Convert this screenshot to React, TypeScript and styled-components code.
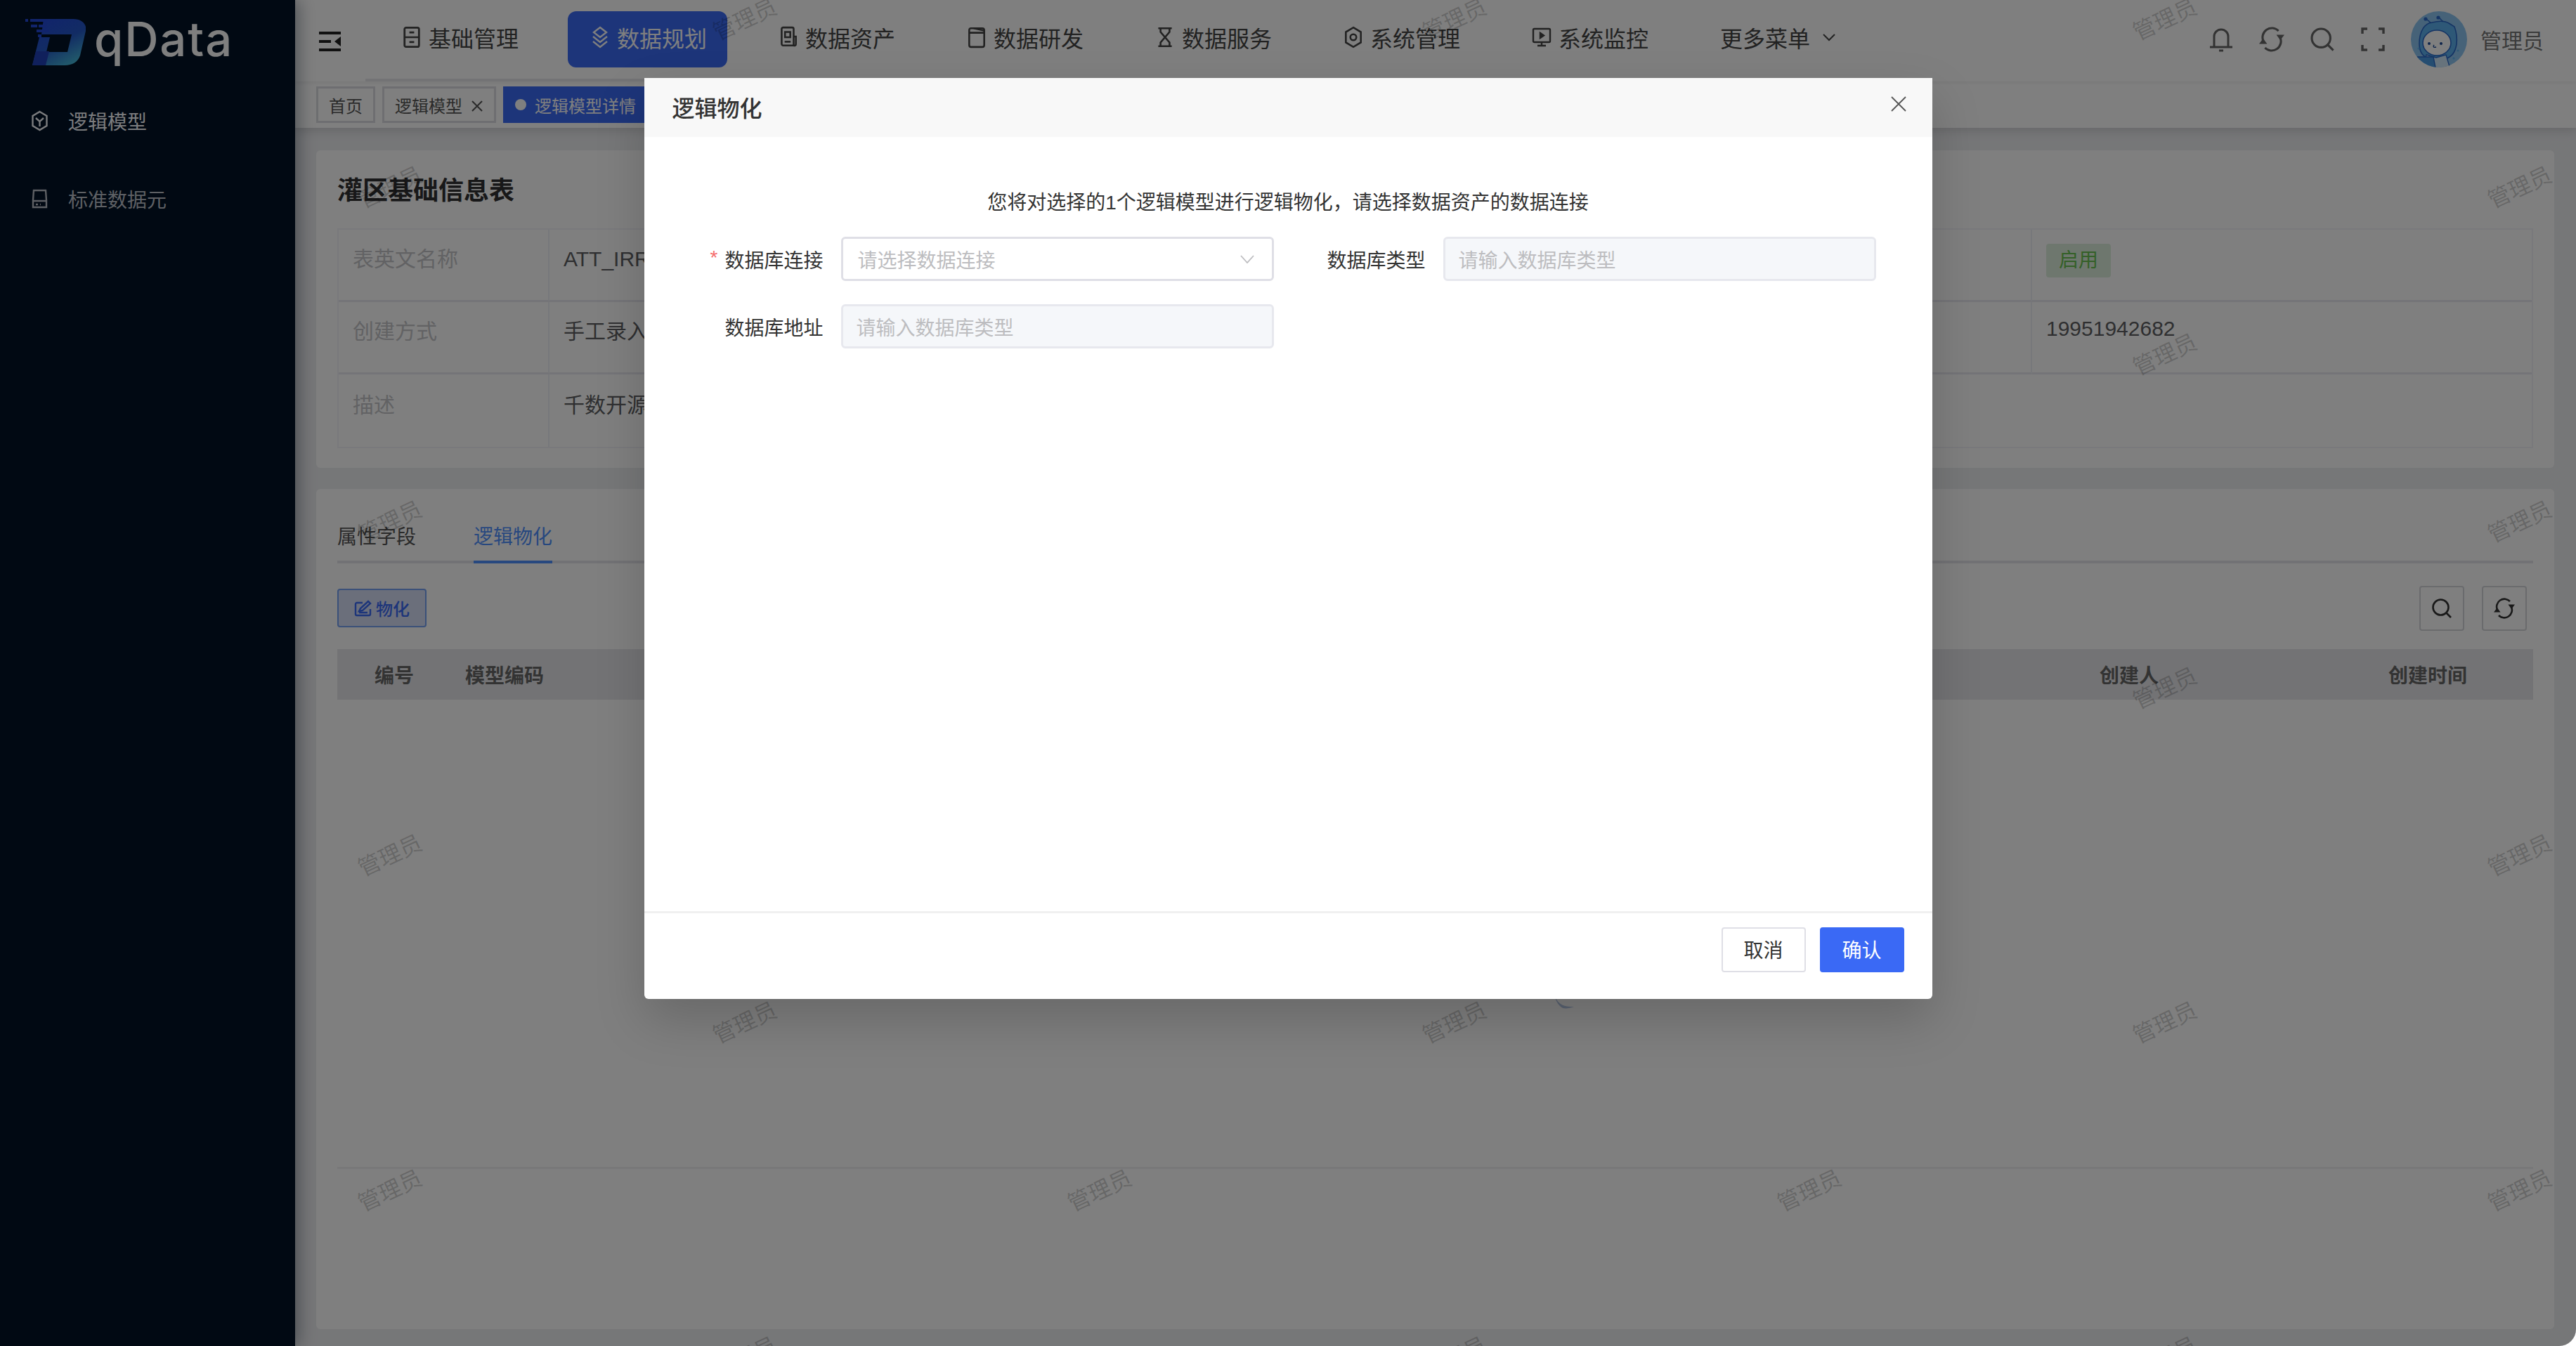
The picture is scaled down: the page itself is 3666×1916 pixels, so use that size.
import React from 'react';
import styled, { createGlobalStyle } from 'styled-components';

const GlobalStyle = createGlobalStyle`
  html, body { margin: 0; padding: 0; width: 3666px; height: 1916px; overflow: hidden; background: #fff; }
  * { box-sizing: border-box; }
  body { font-family: "Liberation Sans", "Noto Sans CJK SC", sans-serif; }
`;

const Page = styled.div`
  position: relative; width: 3666px; height: 1916px; display: grid;
  grid-template-columns: 420px 1fr; overflow: hidden; border-bottom-right-radius: 24px; background: #eceef1;
`;

/* ---------- sidebar ---------- */
const Sidebar = styled.aside`
  background: #031226; display: flex; flex-direction: column; z-index: 2;
  box-shadow: 6px 0 22px rgba(0, 21, 41, .35);
`;
const Brand = styled.div`
  height: 116px; display: flex; align-items: flex-start; padding: 27px 0 0 34px; gap: 12px;
`;
const LogoMark = styled.svg`flex: none; width: 88px; height: 66px;`;
const BrandName = styled.span`
  font-family: Inter, sans-serif; font-size: 67px; line-height: 72px; font-weight: 500; color: #fff; letter-spacing: 1.8px; margin-top: -7px;
`;
const SideMenu = styled.nav`
  display: flex; flex-direction: column; gap: 55px; padding: 28px 0 0 44px;
`;
const SideItem = styled.div<{ $active?: boolean }>`
  display: flex; align-items: center; height: 56px; gap: 28px; font-size: 28px;
  color: ${p => (p.$active ? '#f6f8fc' : '#bcc0c8')};
  svg { width: 25px; height: 30px; flex: none; }
`;

/* ---------- top ---------- */
const Main = styled.div`display: flex; flex-direction: column; min-width: 0;`;
const TopBar = styled.header`
  height: 116px; background: #fff; display: flex; align-items: flex-start; position: relative;
  z-index: 1; box-shadow: 0 2px 6px rgba(0, 0, 0, .06);
`;
const Hamburger = styled.div`
  width: 100px; height: 112px; flex: none; padding: 45px 0 0 34px;
  svg { display: block; width: 31px; height: 28px; }
`;
const Menu = styled.nav`
  width: 2100px; height: 116px; flex: none; display: flex; gap: 41px; padding: 16px 0 0 20px; border-bottom: 4px solid #e6e7eb;
`;
const MenuItem = styled.div<{ $active?: boolean; $auto?: boolean }>`
  width: ${p => (p.$auto ? 'auto' : '227px')}; height: 80px; flex: none; border-radius: 12px; display: flex; align-items: center; gap: 10px; padding: 0 24px 6px 32px;
  font-size: 32px; white-space: nowrap; color: ${p => (p.$active ? '#fff' : '#444')}; background: ${p => (p.$active ? '#3a6af5' : 'none')};
  svg { flex: none; width: 28px; height: 32px; }
`;
const MoreChevron = styled.svg`
  && { width: 18px; height: 12px; margin-left: 8px; }
`;
const TopRight = styled.div`
  flex: 1; display: flex; align-items: center; justify-content: flex-end; height: 112px; gap: 36px; padding-right: 46px;
`;
const ToolIcon = styled.svg`width: 36px; height: 36px; flex: none; color: #666;`;
const UserBox = styled.div`display: flex; align-items: center; gap: 19px; font-size: 30px; white-space: nowrap; color: #777;`;
const Avatar = styled.svg`width: 80px; height: 80px; border-radius: 50%; flex: none;`;

const TagsBar = styled.div`
  height: 66px; background: #fff; display: flex; align-items: center; gap: 10px; padding: 0 0 0 30px;
  box-shadow: 0 4px 14px rgba(0, 0, 0, .14); position: relative;
`;
const Tag = styled.div<{ $active?: boolean }>`
  height: 52px; display: flex; align-items: center; gap: 12px; font-size: 24px; white-space: nowrap;
  padding: 0 ${p => (p.$active ? '34px' : '15px')} 0 ${p => (p.$active ? '14px' : '15px')};
  border: 3px solid ${p => (p.$active ? '#3a6af5' : '#dcdde2')};
  color: ${p => (p.$active ? '#fff' : '#555')}; background: ${p => (p.$active ? '#3a6af5' : '#fff')};
`;
const TagDot = styled.i`width: 16px; height: 16px; border-radius: 50%; background: #fff; display: block;`;
const TagClose = styled.svg`width: 18px; height: 18px; margin-top: 4px;`;

/* ---------- content ---------- */
const Content = styled.main`
  flex: 1; background: #edeef1; padding: 32px 31px 24px 30px; display: flex; flex-direction: column; gap: 30px; min-height: 0;
`;
const Card = styled.section<{ $grow?: boolean }>`
  background: #fff; border-radius: 6px; padding: 0 30px; ${p => (p.$grow ? 'flex: 1; position: relative;' : 'height: 452px;')}
`;
const Title = styled.h2`
  margin: 0; height: 111px; padding-top: 37px; font-size: 36px; line-height: 42px; font-weight: 700; color: #303133;
`;
const Desc = styled.div`
  display: grid; grid-template-columns: 300px 740px 304px 738px 328px 711px; grid-auto-rows: 103px; border: 2px solid #f2f3f8;
`;
const Cell = styled.div<{ $label?: boolean; $span?: number; $last?: boolean }>`
  ${p => (p.$span ? `grid-column: span ${p.$span};` : '')}
  border-right: ${p => (p.$last ? '0' : '2px solid #eff0f6')};
  border-bottom: 3px solid #e8e9f0;
  padding: 24px 20px 0 20px; font-size: 30px; line-height: 36px;
  color: ${p => (p.$label ? '#c4c5c8' : '#5e5f62')};
  &:nth-last-child(-n + 2) { border-bottom: 0; padding-top: 26px; }
`;
const StatusTag = styled.span`
  display: inline-flex; align-items: center; justify-content: center; width: 92px; height: 48px; margin-top: -4px;
  background: #dcefdc; color: #68c050; border-radius: 4px; font-size: 28px; line-height: 48px;
`;
const PhoneText = styled.span`position: relative; top: -4px;`;

const Tabs = styled.div`
  display: flex; gap: 82px; height: 106px; border-bottom: 4px solid #e4e5ea;
`;
const TabItem = styled.div<{ $active?: boolean }>`
  height: 106px; padding: 51px 0 0; font-size: 28px; line-height: 36px; width: 112px; text-align: center;
  color: ${p => (p.$active ? '#4f90ff' : '#555')};
  border-bottom: 4px solid ${p => (p.$active ? '#4f90ff' : 'transparent')};
`;
const Toolbar = styled.div`
  display: flex; align-items: flex-start; justify-content: space-between; height: 122px; padding-top: 32px; padding-right: 9px;
`;
const PlanButton = styled.div`
  width: 127px; height: 55px; margin-top: 4px; border: 2px solid #74a0f2; border-radius: 4px; background: #d6def7;
  color: #3a6af5; font-size: 24px; font-weight: 500; display: flex; align-items: center; justify-content: center; gap: 6px;
  svg { width: 25px; height: 24px; }
`;
const SquareButtons = styled.div`display: flex; gap: 25px;`;
const SquareButton = styled.div`
  width: 64px; height: 64px; border: 2px solid #d4d6da; border-radius: 4px; display: flex; align-items: center; justify-content: center; color: #333;
  svg { width: 30px; height: 30px; }
`;
const TableHead = styled.div`
  height: 72px; background: #e6e7ea; display: grid; grid-template-columns: 182px 2326px 411px 206px; align-items: center;
  font-size: 28px; font-weight: 700; color: #666;
`;
const HeadCell = styled.div<{ $pad: number }>`padding-left: ${p => p.$pad}px; white-space: nowrap;`;
const FootLine = styled.div`
  position: absolute; left: 30px; right: 30px; top: 965px; height: 3px; background: #f0f1f2;
`;
const Spinner = styled.svg`
  position: absolute; left: 1760px; top: 700px; width: 40px; height: 40px;
`;

/* ---------- watermark ---------- */
const Watermarks = styled.div`position: absolute; inset: 0; pointer-events: none; z-index: 3; overflow: hidden;`;
const Mark = styled.span`
  position: absolute; width: 96px; height: 32px; margin: -16px 0 0 -48px; font-size: 32px; line-height: 32px; white-space: nowrap;
  color: rgba(0, 0, 0, .19); transform: rotate(-25deg);
`;

/* ---------- modal ---------- */
const Overlay = styled.div`
  position: absolute; inset: 0; background: rgba(0, 0, 0, .5); z-index: 4; display: flex; justify-content: center; align-items: flex-start; padding-top: 111px;
`;
const Dialog = styled.div`
  width: 1833px; height: 1311px; background: #fff; border-radius: 0 0 6px 6px; display: flex; flex-direction: column;
  box-shadow: 0 30px 70px rgba(0, 0, 0, .18);
`;
const DialogHead = styled.div`
  height: 84px; background: #f8f8f8; display: flex; align-items: center; justify-content: space-between; padding: 0 37px 3px 40px;
  font-size: 32px; font-weight: 500; color: #333; svg { width: 22px; height: 22px; margin-top: -7px; }
`;
const DialogBody = styled.div`flex: 1; padding: 76px 0 0 0; min-height: 0;`;
const Prompt = styled.p`
  margin: 0 0 30px; text-align: center; font-size: 28px; line-height: 36px; color: #333;
`;
const FormGrid = styled.div`
  display: grid; grid-template-columns: 896px 857px; grid-auto-rows: 63px; row-gap: 33px;
`;
const FormRow = styled.div`display: flex; align-items: center; justify-content: flex-end; gap: 25px;`;
const FieldLabel = styled.label`font-size: 28px; color: #333; white-space: nowrap; position: relative;`;
const Required = styled.span`position: absolute; left: -21px; top: 2px; color: #f56c6c; font-size: 28px;`;
const Field = styled.div<{ $disabled?: boolean }>`
  width: 616px; height: 63px; flex: none; display: flex; align-items: center; justify-content: space-between; padding: 0 25px 0 ${p => (p.$disabled ? '19px' : '21px')};
  border: 3px solid ${p => (p.$disabled ? '#e7e8ee' : '#dfdfe6')}; border-radius: 6px; background: ${p => (p.$disabled ? '#f5f7fa' : '#fff')};
  font-size: 28px; color: #bdbdc0;
  svg { width: 20px; height: 12px; }
`;
const DialogFoot = styled.div`
  height: 125px; border-top: 3px solid #f0f0f0; display: flex; justify-content: flex-end; align-items: flex-start; gap: 20px; padding: 20px 40px 0 0;
`;
const FootButton = styled.div<{ $primary?: boolean }>`
  width: 120px; height: 64px; border-radius: 4px; display: flex; align-items: center; justify-content: center; font-size: 28px; padding-bottom: 2px;
  border: 2px solid ${p => (p.$primary ? '#3a69f5' : '#dfdfe6')}; background: ${p => (p.$primary ? '#3a69f5' : '#fff')}; color: ${p => (p.$primary ? '#fff' : '#333')};
`;

/* ---------- icons ---------- */
const S = { fill: 'none', stroke: 'currentColor', strokeWidth: 2.4 } as const;
const IconBase = () => (
  <svg viewBox="0 0 24 28" {...S}><rect x="3" y="2" width="18" height="24" rx="2" /><path d="M3 14h18M9 8h6M9 20h6" /></svg>
);
const IconLayers = () => (
  <svg viewBox="0 0 28 32" {...S}><path d="M14 2l9 7-9 7-9-7zM4 15l10 8 10-8M4 22l10 8 10-8" /></svg>
);
const IconAsset = () => (
  <svg viewBox="0 0 26 30" {...S}><path d="M4 4a2 2 0 012-2h12a2 2 0 012 2v22H6a2 2 0 01-2-2z" /><path d="M20 14h3v10a2 2 0 01-3 2" /><rect x="8.5" y="8" width="7" height="7" /><path d="M8 21h8" /></svg>
);
const IconDev = () => (
  <svg viewBox="0 0 26 30" {...S}><rect x="3" y="3" width="20" height="25" rx="2.5" /><path d="M3 9h20M9 3l14 3" /></svg>
);
const IconHourglass = () => (
  <svg viewBox="0 0 26 30" {...S}><path d="M4 3h18M4 27h18M7 3v5l12 14v5M19 3v5L7 22v5" /></svg>
);
const IconHex = () => (
  <svg viewBox="0 0 26 30" {...S}><path d="M13 2l10 6v14l-10 6-10-6V8z" /><circle cx="13" cy="15" r="4" /></svg>
);
const IconMonitor = () => (
  <svg viewBox="0 0 28 30" {...S}><rect x="2" y="3" width="24" height="19" rx="1.5" /><path d="M14 22v5M8 27h12" /><path d="M12 9l5 3.5-5 3.5z" fill="currentColor" /></svg>
);
const IconHamburger = () => (
  <svg viewBox="0 0 31 28" fill="#222"><rect width="31" height="4" /><rect y="12" width="17" height="4" /><rect y="24" width="31" height="4" /><path d="M31 7v14l-9-7z" /></svg>
);
const IconEdit = () => (
  <svg viewBox="0 0 25 24" fill="none" stroke="currentColor" strokeWidth="2.4"><path d="M12 4H4a2 2 0 00-2 2v14a2 2 0 002 2h17a2 2 0 002-2v-7" /><path d="M7 16l2-4L20 2l3 3-11 10zM7 18h12" /></svg>
);
const SearchGlyph = () => (<><circle cx="13.5" cy="13.5" r="11" /><path d="M21.5 21.5l6.5 6.5" /></>);
const RefreshGlyph = () => (
  <>
    <path d="M5 17a11 11 0 0 1 18-12" />
    <path d="M25 13a11 11 0 0 1-18 12" />
    <path d="M20.5 9.5H30L25.2 16z" fill="currentColor" stroke="none" />
    <path d="M0 20.5h9.5L4.8 14z" fill="currentColor" stroke="none" />
  </>
);

const wmRows = [28, 267, 505, 743, 980, 1218, 1456, 1695, 1933];
const wmCols = [555, 1060, 1565, 2070, 2575, 3081, 3586];
const marks = wmRows.flatMap((y, r) => wmCols.filter((_, c) => (c + r) % 2 === 1).map(x => ({ x, y })));

const menu: [string, React.ReactNode][] = [
  ['基础管理', <IconBase key="a" />],
  ['数据规划', <IconLayers key="b" />],
  ['数据资产', <IconAsset key="c" />],
  ['数据研发', <IconDev key="d" />],
  ['数据服务', <IconHourglass key="e" />],
  ['系统管理', <IconHex key="f" />],
  ['系统监控', <IconMonitor key="g" />],
];

export default function App() {
  return (
    <>
      <GlobalStyle />
      <Page>
        <Sidebar>
          <Brand>
            <LogoMark viewBox="0 0 88 66">
              <defs>
                <linearGradient id="lg" x1="0.2" y1="0" x2="0.8" y2="1">
                  <stop offset="0" stopColor="#2348d8" /><stop offset=".5" stopColor="#2458c8" /><stop offset="1" stopColor="#47c0d8" />
                </linearGradient>
              </defs>
              <path d="M28 0H70C83 0 90 8 88 17L80 52C77 61 69 66 58 66H12L22 26H37L32 47H62L68 22H25Z" fill="url(#lg)" />
              <path d="M12 66l5-20h19l-5 20z" fill="#2040b8" />
              <path d="M2 0h4v4H2zM9 0h24v4H9zM10 8h9v4h-9zM21 8h11v4H21zM18 15h18v4H18zM20 22h5v4h-5z" fill="#2348d8" />
            </LogoMark>
            <BrandName>qData</BrandName>
          </Brand>
          <SideMenu>
            <SideItem $active>
              <svg viewBox="0 0 25 30" fill="none" stroke="currentColor" strokeWidth="2.4"><path d="M12.5 2l10 6v14l-10 6-10-6V8z" /><path d="M7 11l5.5 5 5.5-5M12.5 16v7" /></svg>
              逻辑模型
            </SideItem>
            <SideItem>
              <svg viewBox="0 0 25 30" fill="none" stroke="currentColor" strokeWidth="2.4"><path d="M4 3h17l1 14v10H3V17z" /><path d="M3 18h19M7 23h3M13 23h1" /></svg>
              标准数据元
            </SideItem>
          </SideMenu>
        </Sidebar>
        <Main>
          <TopBar>
            <Hamburger><IconHamburger /></Hamburger>
            <Menu>
              {menu.map(([t, icon], i) => (
                <MenuItem key={t} $active={i === 1}>{icon}{t}</MenuItem>
              ))}
              <MenuItem $auto>
                更多菜单
                <MoreChevron viewBox="0 0 18 12" fill="none" stroke="currentColor" strokeWidth="2"><path d="M1 2l8 8 8-8" /></MoreChevron>
              </MenuItem>
            </Menu>
            <TopRight>
              <ToolIcon viewBox="0 0 36 36" fill="none" stroke="currentColor" strokeWidth="3"><path d="M2 29h32M8 29V14a10 10 0 0120 0v15M15 34h6" /></ToolIcon>
              <ToolIcon viewBox="0 0 30 30" fill="none" stroke="currentColor" strokeWidth="2.6"><RefreshGlyph /></ToolIcon>
              <ToolIcon viewBox="0 0 30 30" fill="none" stroke="currentColor" strokeWidth="2.6"><SearchGlyph /></ToolIcon>
              <ToolIcon viewBox="0 0 36 36" fill="none" stroke="currentColor" strokeWidth="3.4"><path d="M10 3H3v7M26 3h7v7M10 33H3v-7M26 33h7v-7" /></ToolIcon>
              <UserBox>
                <Avatar viewBox="0 0 80 80">
                  <rect width="80" height="80" fill="#8cc4f0" />
                  <path d="M12 46C12 28 20 17 30 16c8-2 18-3 24 1l8 5c3 8 4 16 3 25-2 12-8 18-14 20H24c-7-3-12-10-12-21z" fill="#5cb0ee" stroke="#2a68c8" strokeWidth="1.6" />
                  <ellipse cx="37" cy="45" rx="20" ry="18" fill="#fff" stroke="#2a68c8" strokeWidth="1.6" />
                  <path d="M29 17l-7-6M46 15l-6-6" stroke="#2a68c8" strokeWidth="1.6" fill="none" />
                  <circle cx="21" cy="11" r="2.6" fill="#2a68c8" /><circle cx="39" cy="9" r="2.6" fill="#2a68c8" />
                  <circle cx="26" cy="46" r="2" fill="#1c4a98" /><circle cx="43" cy="46" r="2" fill="#1c4a98" />
                  <path d="M33 48c-2 3 0 4 3 3" stroke="#1c4a98" strokeWidth="1.4" fill="none" />
                  <path d="M22 62l14 4 14-4 6 20H18z" fill="#cfe6f8" stroke="#2a68c8" strokeWidth="1.4" />
                  <path d="M9 65h23l3 15H9z" fill="#4a9ae2" stroke="#2a68c8" strokeWidth="1.4" />
                  <circle cx="11" cy="53" r="1.5" fill="#5cb0ee" /><circle cx="67" cy="56" r="1.5" fill="#5cb0ee" /><circle cx="61" cy="67" r="1.5" fill="#5cb0ee" />
                </Avatar>
                管理员
              </UserBox>
            </TopRight>
          </TopBar>
          <TagsBar>
            <Tag>首页</Tag>
            <Tag>逻辑模型<TagClose viewBox="0 0 18 18" fill="none" stroke="#555" strokeWidth="2"><path d="M2 2l14 14M16 2L2 16" /></TagClose></Tag>
            <Tag $active><TagDot />逻辑模型详情</Tag>
          </TagsBar>
          <Content>
            <Card>
              <Title>灌区基础信息表</Title>
              <Desc>
                <Cell $label>表英文名称</Cell><Cell>ATT_IRR_BASE</Cell><Cell $label /><Cell /><Cell $label /><Cell $last><StatusTag>启用</StatusTag></Cell>
                <Cell $label>创建方式</Cell><Cell>手工录入</Cell><Cell $label /><Cell /><Cell $label /><Cell $last><PhoneText>19951942682</PhoneText></Cell>
                <Cell $label>描述</Cell><Cell $span={5} $last>千数开源</Cell>
              </Desc>
            </Card>
            <Card $grow>
              <Tabs>
                <TabItem>属性字段</TabItem>
                <TabItem $active>逻辑物化</TabItem>
              </Tabs>
              <Toolbar>
                <PlanButton><IconEdit />物化</PlanButton>
                <SquareButtons>
                  <SquareButton><svg viewBox="0 0 30 30" fill="none" stroke="currentColor" strokeWidth="2.6"><SearchGlyph /></svg></SquareButton>
                  <SquareButton><svg viewBox="0 0 30 30" fill="none" stroke="currentColor" strokeWidth="2.6"><RefreshGlyph /></svg></SquareButton>
                </SquareButtons>
              </Toolbar>
              <TableHead>
                <HeadCell $pad={53}>编号</HeadCell>
                <HeadCell $pad={0}>模型编码</HeadCell>
                <HeadCell $pad={0}>创建人</HeadCell>
                <HeadCell $pad={0}>创建时间</HeadCell>
              </TableHead>
              <FootLine />
              <Spinner viewBox="0 0 40 40" fill="#b4c6e4"><path d="M2 20C6 32 14 38 30 37C22 40 14 41 10 36C6 32 3 26 2 20Z" /></Spinner>
            </Card>
          </Content>
        </Main>
        <Watermarks>
          {marks.map(m => <Mark key={`${m.x}-${m.y}`} style={{ left: m.x, top: m.y }}>管理员</Mark>)}
        </Watermarks>
        <Overlay>
          <Dialog>
            <DialogHead>
              逻辑物化
              <svg viewBox="0 0 22 22" fill="none" stroke="#555" strokeWidth="1.8"><path d="M1 1l20 20M21 1L1 21" /></svg>
            </DialogHead>
            <DialogBody>
              <Prompt>您将对选择的1个逻辑模型进行逻辑物化，请选择数据资产的数据连接</Prompt>
              <FormGrid>
                <FormRow>
                  <FieldLabel><Required>*</Required>数据库连接</FieldLabel>
                  <Field>
                    请选择数据连接
                    <svg viewBox="0 0 20 12" fill="none" stroke="#bdbdc0" strokeWidth="1.8"><path d="M1 1l9 10 9-10" /></svg>
                  </Field>
                </FormRow>
                <FormRow>
                  <FieldLabel>数据库类型</FieldLabel>
                  <Field $disabled>请输入数据库类型</Field>
                </FormRow>
                <FormRow>
                  <FieldLabel>数据库地址</FieldLabel>
                  <Field $disabled>请输入数据库类型</Field>
                </FormRow>
              </FormGrid>
            </DialogBody>
            <DialogFoot>
              <FootButton>取消</FootButton>
              <FootButton $primary>确认</FootButton>
            </DialogFoot>
          </Dialog>
        </Overlay>
      </Page>
    </>
  );
}
